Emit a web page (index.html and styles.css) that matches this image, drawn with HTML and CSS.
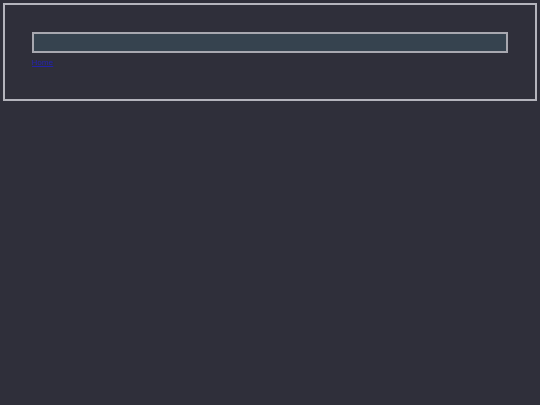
FILE: index.html
```html
<!DOCTYPE html>
<html lang="en">
<head>
    <meta charset="UTF-8">
    <meta name="viewport" content="width=device-width, initial-scale=1.0">
    <title>Home</title>
    <link rel="stylesheet" href="styles.css">
</head>
<body>
    <div class="panel">
        <input type="text" class="search" autocomplete="off">
        <a href="#" class="home-link">Home</a>
    </div>
</body>
</html>
```

FILE: styles.css
```css
body {
    margin: 0;
    padding: 3px;
    background: #2f2f3a;
    font-family: "Liberation Sans", Arial, sans-serif;
}

.panel {
    box-sizing: border-box;
    height: 98px;
    border: 2px solid #b4b4bc;
    padding: 27px 27px 0;
    display: flex;
    flex-direction: column;
    align-items: flex-start;
}

.search {
    box-sizing: border-box;
    width: 100%;
    height: 21px;
    margin: 0;
    padding: 0 4px;
    border: 2px solid #a8a8b0;
    background: #36434f;
    color: #fff;
    outline: none;
}

.home-link {
    margin-top: 5px;
    font-size: 8px;
    line-height: 10px;
    color: #2222a8;
}
```
